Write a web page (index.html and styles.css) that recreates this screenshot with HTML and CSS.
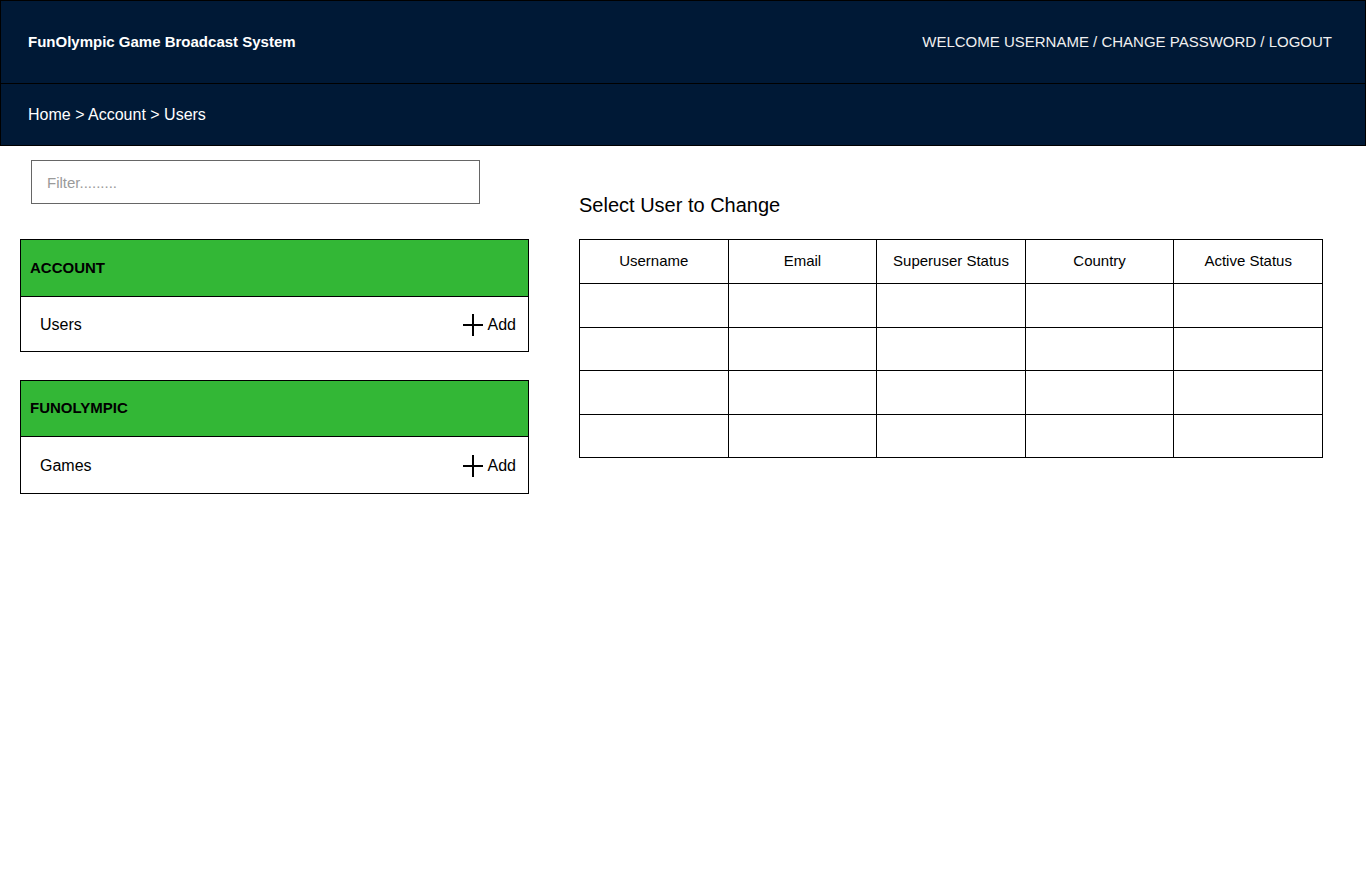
FILE: index.html
```html
<!DOCTYPE html>
<html>
<head>
<meta charset="utf-8">
<title>FunOlympic Game Broadcast System</title>
<link rel="stylesheet" href="styles.css">
</head>
<body>
<header class="header">
  <div class="topbar">
    <div class="brand">FunOlympic Game Broadcast System</div>
    <div class="usernav">WELCOME USERNAME / CHANGE PASSWORD / LOGOUT</div>
  </div>
  <div class="crumbbar">Home &gt; Account &gt; Users</div>
</header>
<main class="main">
  <aside class="sidebar">
    <input class="filter" type="text" placeholder="Filter.........">
    <section class="panel">
      <div class="panel-head">ACCOUNT</div>
      <div class="panel-row">
        <span class="row-label">Users</span>
        <span class="add"><svg class="plus" width="20" height="22" viewBox="0 0 20 22"><path d="M10 0V22M0 11H20" stroke="#000" stroke-width="2" fill="none"/></svg>Add</span>
      </div>
    </section>
    <section class="panel panel-second">
      <div class="panel-head">FUNOLYMPIC</div>
      <div class="panel-row">
        <span class="row-label">Games</span>
        <span class="add"><svg class="plus" width="20" height="22" viewBox="0 0 20 22"><path d="M10 0V22M0 11H20" stroke="#000" stroke-width="2" fill="none"/></svg>Add</span>
      </div>
    </section>
  </aside>
  <section class="content">
    <h1 class="title">Select User to Change</h1>
    <table class="users">
      <thead>
        <tr><th>Username</th><th>Email</th><th>Superuser Status</th><th>Country</th><th>Active Status</th></tr>
      </thead>
      <tbody>
        <tr><td></td><td></td><td></td><td></td><td></td></tr>
        <tr><td></td><td></td><td></td><td></td><td></td></tr>
        <tr><td></td><td></td><td></td><td></td><td></td></tr>
        <tr><td></td><td></td><td></td><td></td><td></td></tr>
      </tbody>
    </table>
  </section>
</main>
</body>
</html>
```

FILE: styles.css
```css
* { box-sizing: border-box; }
html, body { margin: 0; padding: 0; background: #fff; }
body {
  font-family: "Liberation Sans", Arial, sans-serif;
  color: #000;
  width: 1366px;
}
.header {
  background: #001936;
  border: 1px solid #000;
  color: #fff;
}
.topbar {
  height: 83px;
  border-bottom: 1px solid #000;
  display: flex;
  align-items: center;
  justify-content: space-between;
  padding: 0 33px 2px 27px;
}
.brand { font-weight: bold; font-size: 15px; }
.usernav { font-size: 15px; color: #f0f0f0; }
.crumbbar {
  height: 61px;
  display: flex;
  align-items: center;
  padding-left: 27px;
  font-size: 16px;
}
.main {
  display: flex;
  padding-top: 14px;
}
.sidebar {
  width: 529px;
  padding-left: 20px;
  display: flex;
  flex-direction: column;
}
.filter {
  margin-left: 11px;
  width: 449px;
  height: 44px;
  border: 1px solid #666;
  padding: 0 15px;
  font-family: "Liberation Sans", Arial, sans-serif;
  font-size: 15px;
  outline: none;
}
.filter::placeholder { color: #9a9a9a; }
.panel {
  margin-top: 35px;
  border: 1px solid #000;
  width: 509px;
}
.panel-second { margin-top: 28px; }
.panel-head {
  height: 57px;
  background: #33b736;
  border-bottom: 1px solid #000;
  display: flex;
  align-items: center;
  padding: 0 0 2px 9px;
  font-size: 15px;
  font-weight: bold;
}
.panel-second .panel-head { height: 56px; }
.panel-row {
  height: 54px;
  display: flex;
  align-items: center;
  justify-content: space-between;
  padding: 2px 12px 0 19px;
  font-size: 16px;
}
.panel-second .panel-row { height: 56px; }
.add { display: flex; align-items: center; gap: 5px; }
.plus { display: block; }
.content {
  margin-left: 50px;
  padding-top: 33px;
}
.title {
  margin: 0;
  font-size: 20px;
  font-weight: normal;
  line-height: 24px;
}
.users {
  margin-top: 22px;
  border-collapse: collapse;
  table-layout: fixed;
  width: 744px;
}
.users th, .users td {
  border: 1px solid #000;
  padding: 0;
  text-align: center;
  font-size: 15px;
  font-weight: normal;
}
.users th { height: 44px; padding-bottom: 2px; }
.users td { height: 43.5px; }
```
